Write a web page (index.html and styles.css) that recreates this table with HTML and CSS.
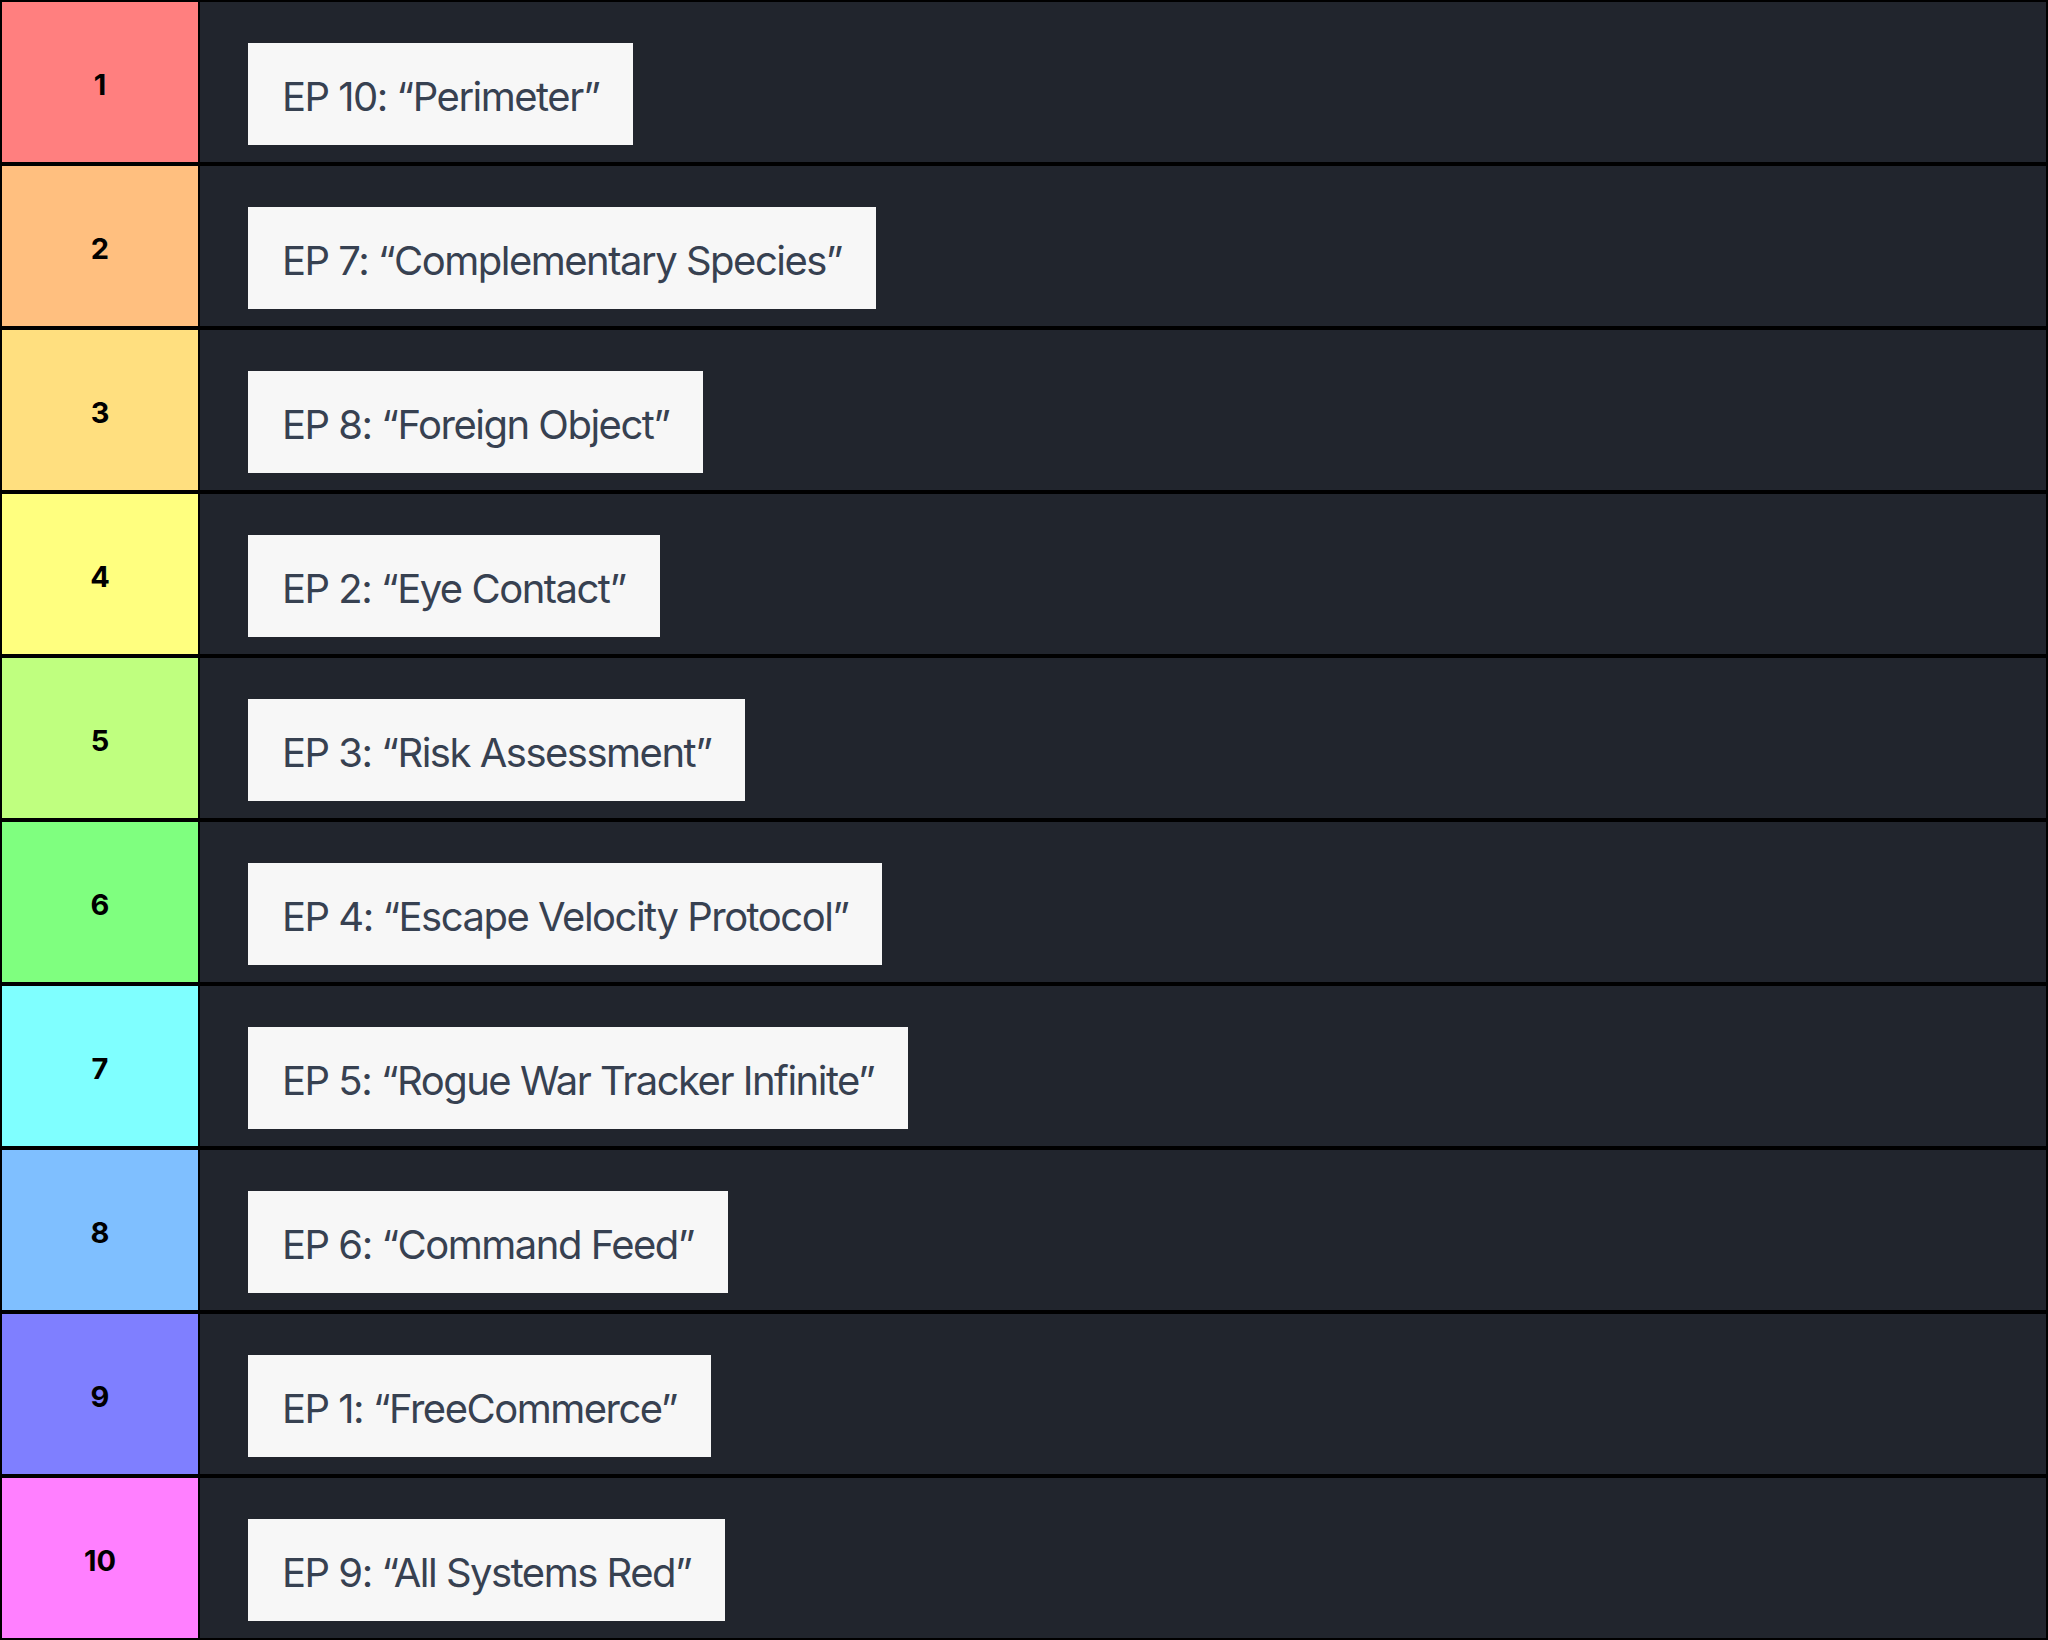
FILE: index.html
```html
<!DOCTYPE html>
<html lang="en">
<head>
    <meta charset="UTF-8">
    <meta name="viewport" content="width=device-width, initial-scale=1.0">
    <title>Tier List</title>
    <link rel="stylesheet" href="styles.css">
</head>
<body>
<div class="tier-list">
    <div class="tier">
        <div class="tier-label tier-1">1</div>
        <div class="tier-items"><div class="item">EP 10: “Perimeter”</div></div>
    </div>
    <div class="tier">
        <div class="tier-label tier-2">2</div>
        <div class="tier-items"><div class="item">EP 7: “Complementary Species”</div></div>
    </div>
    <div class="tier">
        <div class="tier-label tier-3">3</div>
        <div class="tier-items"><div class="item">EP 8: “Foreign Object”</div></div>
    </div>
    <div class="tier">
        <div class="tier-label tier-4">4</div>
        <div class="tier-items"><div class="item">EP 2: “Eye Contact”</div></div>
    </div>
    <div class="tier">
        <div class="tier-label tier-5">5</div>
        <div class="tier-items"><div class="item">EP 3: “Risk Assessment”</div></div>
    </div>
    <div class="tier">
        <div class="tier-label tier-6">6</div>
        <div class="tier-items"><div class="item">EP 4: “Escape Velocity Protocol”</div></div>
    </div>
    <div class="tier">
        <div class="tier-label tier-7">7</div>
        <div class="tier-items"><div class="item">EP 5: “Rogue War Tracker Infinite”</div></div>
    </div>
    <div class="tier">
        <div class="tier-label tier-8">8</div>
        <div class="tier-items"><div class="item">EP 6: “Command Feed”</div></div>
    </div>
    <div class="tier">
        <div class="tier-label tier-9">9</div>
        <div class="tier-items"><div class="item">EP 1: “FreeCommerce”</div></div>
    </div>
    <div class="tier">
        <div class="tier-label tier-10">10</div>
        <div class="tier-items"><div class="item">EP 9: “All Systems Red”</div></div>
    </div>
</div>
</body>
</html>
```

FILE: styles.css
```css
body {
    margin: 0;
    background-color: #000;
    font-family: Inter, "Noto Sans", sans-serif;
}
.tier-list {
    display: flex;
    flex-direction: column;
}
.tier {
    display: flex;
    height: 160px;
    border: 2px solid #000;
    background-color: #21252d;
}
.tier-label {
    width: 198px;
    flex-shrink: 0;
    display: flex;
    align-items: center;
    justify-content: center;
    border-right: 2px solid #000;
    font-size: 29px;
    font-weight: 700;
    color: #000;
    padding-top: 4px;
    box-sizing: border-box;
}
.tier-1 { background-color: #ff7f7f; }
.tier-2 { background-color: #ffbf7f; }
.tier-3 { background-color: #ffdf7f; }
.tier-4 { background-color: #ffff7f; }
.tier-5 { background-color: #bfff7f; }
.tier-6 { background-color: #7fff7f; }
.tier-7 { background-color: #7fffff; }
.tier-8 { background-color: #7fbfff; }
.tier-9 { background-color: #7f7fff; }
.tier-10 { background-color: #ff7fff; }
.tier-items {
    flex: 1;
    display: flex;
    align-items: flex-start;
    padding: 41px 0 0 48px;
}
.item {
    background-color: #f7f7f7;
    color: #374151;
    font-size: 40px;
    line-height: 48px;
    letter-spacing: -1.5px;
    padding: 30px 34px 24px 34px;
}
```
